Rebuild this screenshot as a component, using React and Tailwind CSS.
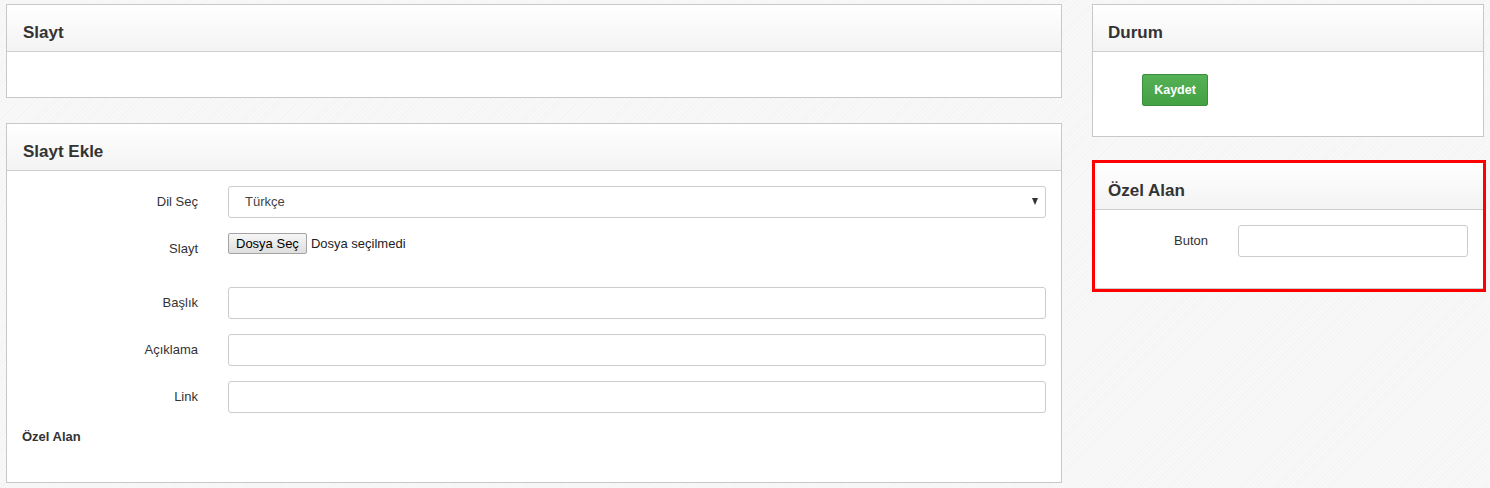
import React from "react";

const font = { fontFamily: '"Liberation Sans", Arial, sans-serif' };

function PanelHeader({ title, pl = "pl-[16px]" }) {
  return (
    <div className={`h-[47px] border-b border-[#cfcfcf] bg-[linear-gradient(#ffffff,#f3f3f3)] ${pl} pt-[18px]`}>
      <div className="text-[17px] font-bold leading-[20px] text-[#333333]">{title}</div>
    </div>
  );
}

function Row({ label, children, labelW = "w-[191px]" }) {
  return (
    <div className="flex items-start">
      <div className={`${labelW} shrink-0 text-right text-[13px] leading-[32px] text-[#333333]`}>{label}</div>
      <div className="ml-[30px] flex-1">{children}</div>
    </div>
  );
}

function TextInput() {
  return <div className="h-[32px] rounded-[3px] border border-[#cccccc] bg-white" />;
}

export default function App() {
  return (
    <div
      style={font}
      className="min-h-[488px] w-[1490px] bg-[#f6f6f6] bg-[repeating-linear-gradient(135deg,#f4f4f4_0px,#f4f4f4_1px,#f8f8f8_1px,#f8f8f8_3px)] pl-[6px] pt-[4px]"
    >
      <div className="flex items-start gap-[30px]">
        {/* Left column */}
        <div className="flex w-[1056px] flex-col">
          <div className="border border-[#c8c8c8] bg-white">
            <PanelHeader title="Slayt" />
            <div className="h-[45px]" />
          </div>

          <div className="mt-[25px] border border-[#c8c8c8] bg-white">
            <PanelHeader title="Slayt Ekle" />
            <div className="h-[311px] pr-[15px] pt-[15px]">
              <div className="flex flex-col gap-[15px]">
                <Row label="Dil Seç">
                  <div className="relative flex h-[32px] items-center rounded-[3px] border border-[#cccccc] bg-white pl-[16px] text-[13px] text-[#444444]">
                    Türkçe
                    <span className="absolute right-[7px] top-[11px] h-0 w-0 border-x-[3.5px] border-t-[7px] border-x-transparent border-t-[#333333]" />
                  </div>
                </Row>
                <div className="flex h-[39px] items-start">
                  <div className="w-[191px] shrink-0 pt-[6px] text-right text-[13px] leading-[20px] text-[#333333]">
                    Slayt
                  </div>
                  <div className="ml-[30px] flex items-center">
                    <button className="h-[21px] rounded-[2px] border border-[#a3a3a3] bg-[linear-gradient(#f6f6f6,#dedede)] px-[7px] text-[13px] leading-[19px] text-black">
                      Dosya Seç
                    </button>
                    <span className="ml-[4px] text-[13px] text-[#222222]">Dosya seçilmedi</span>
                  </div>
                </div>
                <Row label="Başlık">
                  <TextInput />
                </Row>
                <Row label="Açıklama">
                  <TextInput />
                </Row>
                <Row label="Link">
                  <TextInput />
                </Row>
                <div className="pl-[15px] text-[13px] font-bold leading-[18px] text-[#333333]">Özel Alan</div>
              </div>
            </div>
          </div>
        </div>

        {/* Right column */}
        <div className="flex w-[394px] flex-col">
          <div className="mr-[2px] border border-[#c8c8c8] bg-white">
            <PanelHeader title="Durum" pl="pl-[15px]" />
            <div className="h-[84px] pl-[49px] pt-[22px]">
              <button className="h-[32px] w-[66px] rounded-[2px] border border-[#3b8e3b] bg-[linear-gradient(#55b155,#43a043)] text-[12.5px] font-bold text-white">
                Kaydet
              </button>
            </div>
          </div>

          <div className="mt-[23px] border-[3px] border-[#ff0000] bg-white">
            <div className="border-b border-[#cfcfcf] pb-[2px]">
              <div className="h-[47px] border-b border-[#cfcfcf] bg-[linear-gradient(#ffffff,#f3f3f3)] pl-[13px] pt-[18px]">
                <div className="text-[17px] font-bold leading-[20px] text-[#333333]">Özel Alan</div>
              </div>
              <div className="h-[76px] pr-[15px] pt-[15px]">
                <Row label="Buton" labelW="w-[113px]">
                  <TextInput />
                </Row>
              </div>
            </div>
          </div>
        </div>
      </div>
    </div>
  );
}
